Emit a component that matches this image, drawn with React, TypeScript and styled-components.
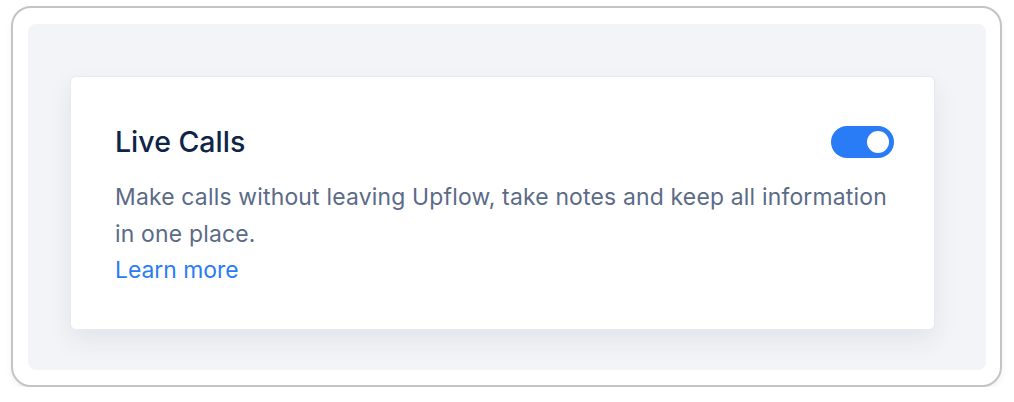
import styled, { createGlobalStyle } from "styled-components"
import { useState } from "react"

const GlobalStyle = createGlobalStyle`
  html, body {
    margin: 0;
    padding: 0;
    background: #ffffff;
    font-family: Inter, "Noto Sans", sans-serif;
  }
`

const Frame = styled.div`
  box-sizing: border-box;
  width: 991px;
  height: 381px;
  margin: 6px 0 0 11px;
  padding: 16px 14px 15px 15px;
  border: 2px solid #c4c4c4;
  border-radius: 20px;
  box-shadow: 0 3px 6px rgba(0, 0, 0, 0.06);
  background: #ffffff;
`

const Panel = styled.div`
  box-sizing: border-box;
  height: 100%;
  padding: 52px 51px 40px 42px;
  background: #f3f4f7;
  border-radius: 8px;
`

const Card = styled.div`
  box-sizing: border-box;
  height: 254px;
  padding: 45px 40px 0 44px;
  background: #ffffff;
  border: 1px solid #e6e9ef;
  border-radius: 6px;
  box-shadow: 0 10px 24px rgba(40, 55, 90, 0.08);
`

const Header = styled.div`
  display: flex;
  justify-content: space-between;
  align-items: center;
  height: 40px;
`

const Title = styled.h2`
  margin: 0;
  font-size: 28.5px;
  line-height: 40px;
  font-weight: 500;
  color: #0f2449;
`

const Toggle = styled.button<{ $on: boolean }>`
  position: relative;
  width: 63px;
  height: 32px;
  padding: 0;
  border: none;
  border-radius: 16px;
  background: ${(p) => (p.$on ? "#2a7cf6" : "#cfd5df")};
  cursor: pointer;

  &::after {
    content: "";
    position: absolute;
    top: 5px;
    left: ${(p) => (p.$on ? "36px" : "5px")};
    width: 22px;
    height: 22px;
    border-radius: 50%;
    background: #ffffff;
  }
`

const Description = styled.p`
  margin: 17px 0 0;
  font-size: 22.9px;
  line-height: 36.6px;
  letter-spacing: 0.2px;
  color: #5b6b86;
`

const LearnMore = styled.a`
  display: block;
  font-size: 22.9px;
  line-height: 36.6px;
  color: #2a7cf6;
  text-decoration: none;
`

export default function App() {
  const [enabled, setEnabled] = useState(true)

  return (
    <>
      <GlobalStyle />
      <Frame>
        <Panel>
          <Card>
            <Header>
              <Title>Live Calls</Title>
              <Toggle $on={enabled} onClick={() => setEnabled(!enabled)} aria-label="Toggle live calls" />
            </Header>
            <Description>
              Make calls without leaving Upflow, take notes and keep all information in one place.
            </Description>
            <LearnMore href="#">Learn more</LearnMore>
          </Card>
        </Panel>
      </Frame>
    </>
  )
}
